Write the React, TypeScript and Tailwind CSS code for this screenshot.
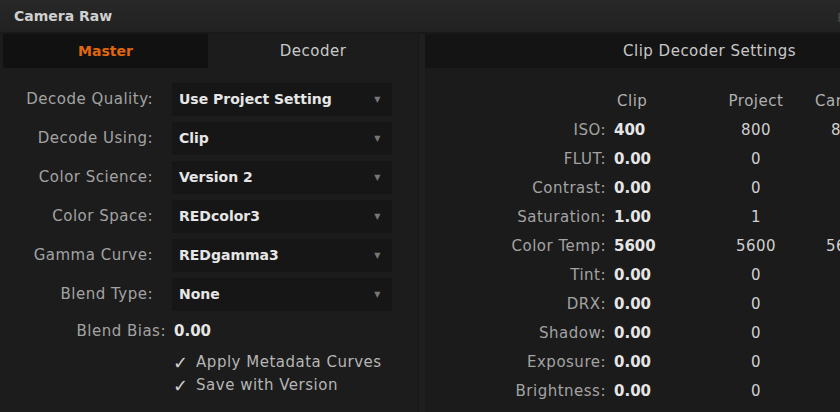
import React from "react";

const selects = [
  { label: "Decode Quality:", value: "Use Project Setting" },
  { label: "Decode Using:", value: "Clip" },
  { label: "Color Science:", value: "Version 2" },
  { label: "Color Space:", value: "REDcolor3" },
  { label: "Gamma Curve:", value: "REDgamma3" },
  { label: "Blend Type:", value: "None" },
];

const params = [
  { label: "ISO:", clip: "400", project: "800", camera: "800" },
  { label: "FLUT:", clip: "0.00", project: "0", camera: "0" },
  { label: "Contrast:", clip: "0.00", project: "0", camera: "0" },
  { label: "Saturation:", clip: "1.00", project: "1", camera: "1" },
  { label: "Color Temp:", clip: "5600", project: "5600", camera: "5600" },
  { label: "Tint:", clip: "0.00", project: "0", camera: "0" },
  { label: "DRX:", clip: "0.00", project: "0", camera: "0" },
  { label: "Shadow:", clip: "0.00", project: "0", camera: "0" },
  { label: "Exposure:", clip: "0.00", project: "0", camera: "0" },
  { label: "Brightness:", clip: "0.00", project: "0", camera: "0" },
];

export default function App() {
  return (
    <div className="w-[840px] h-[412px] overflow-hidden bg-[#1c1c1c] flex flex-col font-['DejaVu_Sans',sans-serif] text-[15px] tracking-[0.5px]">
      {/* title bar */}
      <div className="h-[34px] shrink-0 flex items-center justify-between pl-[14px] bg-gradient-to-b from-[#282828] to-[#212121] border-b-2 border-[#191919]">
        <span className="font-bold text-[14px] tracking-normal text-[#d0d0d0]">Camera Raw</span>
        <span className="text-[12px] text-[#4f4f4f] mr-[-6px] mt-[4px]">R</span>
      </div>

      <div className="flex flex-1">
        {/* left panel */}
        <div className="w-[418px] shrink-0 pl-[3px] flex flex-col">
          <div className="flex h-[34px]">
            <div className="w-[205px] bg-[#111] flex items-center justify-center font-bold text-[14px] tracking-normal text-[#e0670f]">
              Master
            </div>
            <div className="flex-1 flex items-center justify-center text-[#c8c8c8]">Decoder</div>
          </div>

          <div className="mt-[15px] flex flex-col gap-[6px]">
            {selects.map((s) => (
              <div key={s.label} className="flex items-center h-[33px]">
                <span className="w-[150px] text-right text-[#a3a3a3] whitespace-nowrap">{s.label}</span>
                <div className="ml-[19px] w-[220px] h-full bg-[#161616] flex items-center justify-between pl-[7px] pr-[11px]">
                  <span className="font-bold text-[14px] tracking-normal text-[#e6e6e6]">{s.value}</span>
                  <span className="text-[8px] text-[#777]">▼</span>
                </div>
              </div>
            ))}
          </div>

          <div className="mt-[10px] h-[20px] flex items-center">
            <span className="w-[163px] text-right text-[#a3a3a3] whitespace-nowrap">Blend Bias:</span>
            <span className="ml-[8px] font-bold text-[15px] tracking-normal text-[#e6e6e6]">0.00</span>
          </div>

          <div className="mt-[10px] flex flex-col pl-[170px]">
            {["Apply Metadata Curves", "Save with Version"].map((t) => (
              <div key={t} className="h-[23px] flex items-center gap-[8px] text-[#b5b5b5] whitespace-nowrap">
                <span className="text-[#d0d0d0] text-[18px] font-bold tracking-normal">✓</span>
                <span>{t}</span>
              </div>
            ))}
          </div>
        </div>

        {/* divider */}
        <div className="w-[7px] shrink-0 bg-[#1f1f1f] border-l border-[#181818]" />

        {/* right panel */}
        <div className="flex-1 bg-[#1b1b1b] flex flex-col">
          <div className="h-[34px] bg-[#141414] flex items-center pl-[198px] text-[#c8c8c8] whitespace-nowrap">
            Clip Decoder Settings
          </div>

          <div className="mt-[19px] flex flex-col whitespace-nowrap">
            <div className="h-[29px] flex items-center text-[#b0b0b0]">
              <span className="w-[181px]" />
              <span className="ml-[8px] w-[92px] pl-[3px]">Clip</span>
              <span className="w-[100px] text-center">Project</span>
              <span className="w-[80px] text-center">Camera</span>
            </div>
            {params.map((p) => (
              <div key={p.label} className="h-[29px] flex items-center">
                <span className="w-[181px] text-right text-[#a3a3a3]">{p.label}</span>
                <span className="ml-[8px] w-[92px] font-bold tracking-normal text-[#e6e6e6]">{p.clip}</span>
                <span className="w-[100px] text-center text-[#cfcfcf]">{p.project}</span>
                <span className="w-[80px] text-center text-[#cfcfcf]">{p.camera}</span>
              </div>
            ))}
          </div>
        </div>
      </div>
    </div>
  );
}
